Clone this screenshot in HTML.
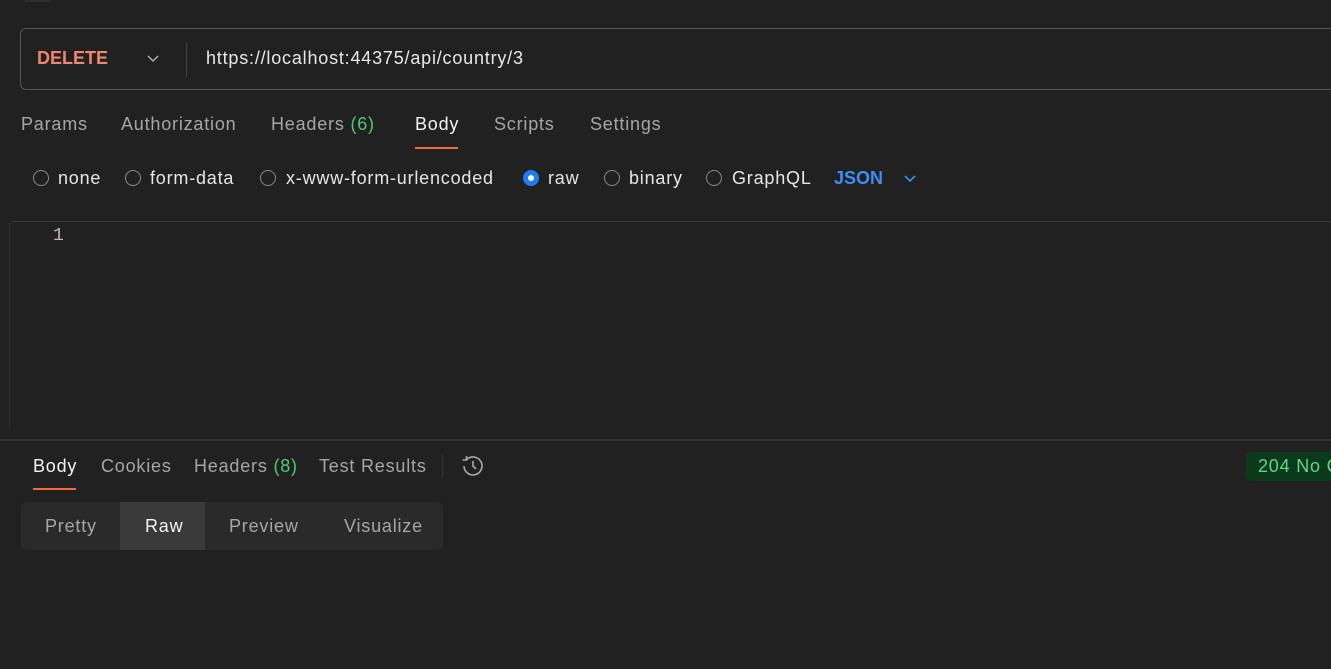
<!DOCTYPE html><html><head><style>
*{margin:0;padding:0;box-sizing:border-box}
body{width:1331px;height:669px;background:#212121;font-family:"Liberation Sans",sans-serif;color:#a6a6a6;position:relative;overflow:hidden}
.a{position:absolute;white-space:nowrap}
.t{font-size:18px;letter-spacing:0.8px}
.r{position:absolute;width:16px;height:16px;border:1px solid #8a8a8a;border-radius:50%}
</style></head><body>
<div class="a" style="left:25px;top:0;width:25px;height:2px;background:#2e2e2e"></div>
<div class="a" style="left:20px;top:28px;width:1330px;height:62px;border:1px solid #555;border-radius:6px"></div>
<div class="a" style="left:37px;top:48px;font-size:18px;color:#f0856e;font-weight:bold">DELETE</div>
<svg class="a" style="left:146px;top:53px" width="14" height="10"><path d="M2 3l5 5 5-5" stroke="#aaa" stroke-width="1.5" fill="none"/></svg>
<div class="a" style="left:186px;top:42px;width:1px;height:35px;background:#444"></div>
<div class="a t" style="left:206px;top:48px;color:#e8e8e8">https://localhost:44375/api/country/3</div>
<div class="a t" style="left:21px;top:114px">Params</div>
<div class="a t" style="left:121px;top:114px">Authorization</div>
<div class="a t" style="left:271px;top:114px">Headers <span style="color:#4fc978">(6)</span></div>
<div class="a t" style="left:415px;top:114px;color:#f2f2f2">Body</div>
<div class="a" style="left:415px;top:147px;width:43px;height:2px;background:#f26b3a"></div>
<div class="a t" style="left:494px;top:114px">Scripts</div>
<div class="a t" style="left:590px;top:114px">Settings</div>
<div class="r" style="left:33px;top:170px"></div><div class="a t" style="left:58px;top:168px;color:#e6e6e6">none</div>
<div class="r" style="left:125px;top:170px"></div><div class="a t" style="left:150px;top:168px;color:#e6e6e6">form-data</div>
<div class="r" style="left:260px;top:170px"></div><div class="a t" style="left:286px;top:168px;color:#e6e6e6">x-www-form-urlencoded</div>
<div class="r" style="left:523px;top:170px;border:5px solid #1a7ef2;background:#fff"></div><div class="a t" style="left:548px;top:168px;color:#e6e6e6">raw</div>
<div class="r" style="left:604px;top:170px"></div><div class="a t" style="left:629px;top:168px;color:#e6e6e6">binary</div>
<div class="r" style="left:706px;top:170px"></div><div class="a t" style="left:732px;top:168px;color:#e6e6e6">GraphQL</div>
<div class="a" style="left:834px;top:168px;font-size:18px;color:#3d8ef5;font-weight:bold">JSON</div>
<svg class="a" style="left:903px;top:173px" width="14" height="10"><path d="M2 3l5 5 5-5" stroke="#3d8ef5" stroke-width="1.6" fill="none"/></svg>
<div class="a" style="left:12px;top:221px;width:1320px;height:1px;background:#3a3a3a"></div>
<div class="a" style="left:9px;top:222px;width:1px;height:206px;background:#333"></div>
<div class="a" style="left:53px;top:226px;font-size:18px;color:#c8b8b8;font-family:'Liberation Mono',monospace">1</div>
<div class="a" style="left:0;top:439px;width:1331px;height:2px;background:#303030"></div>
<div class="a t" style="left:33px;top:456px;color:#f2f2f2">Body</div>
<div class="a" style="left:33px;top:488px;width:43px;height:2px;background:#f26b3a"></div>
<div class="a t" style="left:101px;top:456px">Cookies</div>
<div class="a t" style="left:194px;top:456px">Headers <span style="color:#4fc978">(8)</span></div>
<div class="a t" style="left:319px;top:456px">Test Results</div>
<div class="a" style="left:442px;top:455px;width:1px;height:22px;background:#3a3a3a"></div>
<svg class="a" style="left:460px;top:454px" width="26" height="24" viewBox="0 0 26 24"><path d="M4 12a9 9 0 1 0 2.6-6.4" stroke="#aaa" stroke-width="1.6" fill="none"/><path d="M6.5 2v4h-4" stroke="#aaa" stroke-width="1.6" fill="none"/><path d="M13 7v5l3 3" stroke="#aaa" stroke-width="1.6" fill="none"/></svg>
<div class="a" style="left:1246px;top:452px;width:100px;height:29px;background:#0b3a1c;border-radius:5px"></div>
<div class="a t" style="left:1258px;top:456px;color:#5fd68a">204 No Content</div>
<div class="a" style="left:21px;top:502px;width:422px;height:48px;background:#2a2a2a;border-radius:5px"></div>
<div class="a" style="left:120px;top:502px;width:85px;height:48px;background:#3a3a3a"></div>
<div class="a t" style="left:45px;top:516px">Pretty</div>
<div class="a t" style="left:145px;top:516px;color:#f2f2f2">Raw</div>
<div class="a t" style="left:229px;top:516px">Preview</div>
<div class="a t" style="left:344px;top:516px">Visualize</div>
</body></html>
